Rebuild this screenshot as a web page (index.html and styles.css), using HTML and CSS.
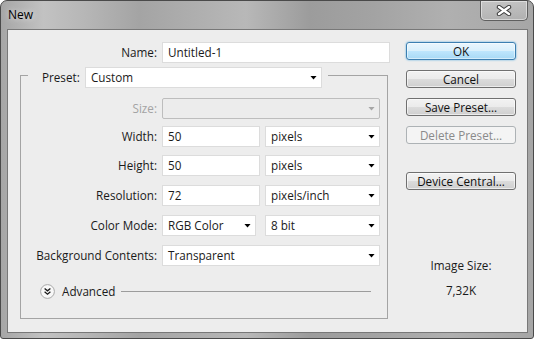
FILE: index.html
```html
<!DOCTYPE html>
<html>

<head>
  <meta charset="utf-8">
  <title>New</title>
  <link rel="stylesheet" href="styles.css">
</head>

<body>
  <div class="window">
    <div class="titlebar">
      <span class="title">New</span>
      <div class="close-btn">
        <svg width="16" height="11" viewBox="0 0 16 11">
          <path d="M3 2l10 7M13 2L3 9" stroke="#3a3a3a" stroke-width="4.4" stroke-linecap="round"/>
          <path d="M3 2l10 7M13 2L3 9" stroke="#fff" stroke-width="2.4" stroke-linecap="round"/>
        </svg>
      </div>
    </div>

    <div class="client">
      <div class="form">
        <div class="name-row">
          <label class="label">Name:</label>
          <div class="field name-field">Untitled-1</div>
        </div>

        <div class="group">
          <div class="group-head">
            <label class="preset-label">Preset:</label>
            <div class="select preset-select"><span>Custom</span><i class="arrow"></i></div>
          </div>

          <div class="rows">
            <div class="row">
              <label class="label off">Size:</label>
              <div class="select full off"><span></span><i class="arrow"></i></div>
            </div>
            <div class="row width-row">
              <label class="label">Width:</label>
              <div class="field num">50</div>
              <div class="select unit"><span>pixels</span><i class="arrow"></i></div>
            </div>
            <div class="row height-row">
              <label class="label">Height:</label>
              <div class="field num">50</div>
              <div class="select unit"><span>pixels</span><i class="arrow"></i></div>
            </div>
            <div class="row">
              <label class="label">Resolution:</label>
              <div class="field num">72</div>
              <div class="select unit"><span>pixels/inch</span><i class="arrow"></i></div>
            </div>
            <div class="row">
              <label class="label">Color Mode:</label>
              <div class="select mode"><span>RGB Color</span><i class="arrow"></i></div>
              <div class="select unit"><span>8 bit</span><i class="arrow"></i></div>
            </div>
            <div class="row">
              <label class="label">Background Contents:</label>
              <div class="select full"><span>Transparent</span><i class="arrow"></i></div>
            </div>
          </div>

          <div class="advanced">
            <svg width="15" height="15" viewBox="0 0 15 15">
              <circle cx="7.5" cy="7.5" r="6.9" fill="#f8f8f8" stroke="#a8a8a8"/>
              <path d="M4.6 4.4l2.9 2.4 2.9-2.4M4.6 7.8l2.9 2.4 2.9-2.4" fill="none" stroke="#1a1a1a" stroke-width="1.3"/>
            </svg>
            <span>Advanced</span>
            <div class="line"></div>
          </div>
        </div>
      </div>

      <div class="side">
        <div class="btn default">OK</div>
        <div class="btn">Cancel</div>
        <div class="btn">Save Preset...</div>
        <div class="btn off">Delete Preset...</div>
        <div class="btn device">Device Central...</div>

        <div class="image-size">
          <div>Image Size:</div>
          <div class="size-value">7,32K</div>
        </div>
      </div>
    </div>
  </div>
</body>

</html>
```

FILE: styles.css
```css
* {
  padding: 0px;
  margin: 0px;
  box-sizing: border-box;
}

body {
  width: 534px;
  height: 339px;
  overflow: hidden;
  background: #fff;
  font-family: "Open Sans", "Noto Sans", sans-serif;
  font-size: 11.7px;
  color: #1a1a1a;
}

.window {
  width: 534px;
  height: 339px;
  border: 1px solid #4a4a4a;
  border-radius: 7px 7px 3px 3px;
  background: linear-gradient(90deg, #a6a6a6 0%, #c2c2c2 8%, #b6b6b6 16%, #a4a4a4 26%, #b8b8b8 46%, #9c9c9c 58%, #a3a3a3 70%, #b0b0b0 84%, #a6a6a6 100%);
  display: flex;
  flex-direction: column;
}

/* title bar */
.titlebar {
  height: 28px;
  display: flex;
  align-items: flex-start;
  justify-content: space-between;
}

.title {
  line-height: 28px;
  padding-left: 7px;
  font-size: 12px;
  color: #000;
  text-shadow: 0 0 6px rgba(255, 255, 255, 0.8);
}

.close-btn {
  width: 48px;
  height: 20px;
  margin-right: 5px;
  border: 1px solid #5f5f5f;
  border-top: none;
  border-radius: 0 0 5px 5px;
  background: linear-gradient(rgba(255, 255, 255, 0.3), rgba(255, 255, 255, 0.1));
  box-shadow: inset 0 0 0 1px rgba(255, 255, 255, 0.45);
  display: flex;
  align-items: center;
  justify-content: center;
}

/* dialog body */
.client {
  margin: 0 5px 0 6px;
  height: 304px;
  border: 1px solid #787878;
  background: #ededed;
  display: flex;
}

.form {
  width: 382px;
  padding: 12px 0 0 12px;
}

.name-row,
.row {
  display: flex;
  height: 21px;
}

.label {
  width: 136px;
  margin-right: 5px;
  text-align: right;
  line-height: 21px;
  white-space: nowrap;
}

.name-row .label {
  width: 137px;
}

.label.off {
  color: #a3a3a3;
}

.field,
.select {
  height: 21px;
  background: #fff;
  border: 1px solid #dcdcdc;
  line-height: 19px;
  padding-left: 5px;
}

.name-field {
  width: 228px;
}

.select {
  display: flex;
  align-items: center;
  justify-content: space-between;
  padding-right: 4px;
}

.select span {
  line-height: 19px;
}

.arrow {
  width: 7px;
  height: 4px;
  background: #000;
  clip-path: polygon(0 0, 100% 0, 50% 100%);
}

.select.off {
  background: #ececec;
  border-color: #bdbdbd;
  border-radius: 2px;
}

.select.off .arrow {
  background: #a6a6a6;
}

/* preset group */
.group {
  margin-top: 12px;
  width: 368px;
  height: 244px;
  border: 1px solid #a4a4a4;
}

.group-head {
  display: flex;
  width: fit-content;
  height: 21px;
  margin: -9px 0 0 7px;
  padding: 0 6px 0 14px;
  background: #ededed;
}

.preset-label {
  width: 43px;
  line-height: 21px;
}

.preset-select {
  width: 237px;
}

.rows {
  margin-top: 10px;
}

.row + .row {
  margin-top: 9px;
}

.row.width-row {
  margin-top: 7px;
}

.row.height-row {
  margin-top: 8px;
}

.full {
  width: 218px;
}

.num {
  width: 98px;
  margin-right: 5px;
}

.mode {
  width: 94px;
  margin-right: 9px;
}

.unit {
  width: 115px;
}

.advanced {
  margin-top: 17px;
  height: 16px;
  padding: 0 16px 0 19px;
  display: flex;
  align-items: center;
}

.advanced span {
  margin-left: 7px;
  line-height: 16px;
}

.advanced .line {
  flex: 1;
  height: 1px;
  margin-left: 6px;
  background: #9c9c9c;
}

/* buttons column */
.side {
  width: 126px;
  padding: 12px 0 0 16px;
}

.btn {
  width: 110px;
  height: 18px;
  border: 1px solid #707070;
  border-radius: 3px;
  background: linear-gradient(#f2f2f2 0%, #ebebeb 50%, #dcdcdc 51%, #cfcfcf 100%);
  box-shadow: inset 0 0 0 1px rgba(255, 255, 255, 0.6);
  text-align: center;
  line-height: 16px;
  color: #111;
}

.btn + .btn {
  margin-top: 10px;
}

.btn.default {
  border-color: #3c7fb1;
  background: linear-gradient(#eaf6fd 0%, #d9f0fc 50%, #bee6fd 51%, #a7d9f5 100%);
  box-shadow: inset 0 0 0 1px rgba(255, 255, 255, 0.5), 0 0 2px #48a8e0;
}

.btn.off {
  border-color: #adb2b5;
  background: #f4f4f4;
  box-shadow: none;
  color: #8a8a8a;
}

.btn.device {
  margin-top: 28px;
}

.image-size {
  margin-top: 67px;
  width: 110px;
  text-align: center;
  line-height: 16px;
}

.size-value {
  margin-top: 9px;
}
```
